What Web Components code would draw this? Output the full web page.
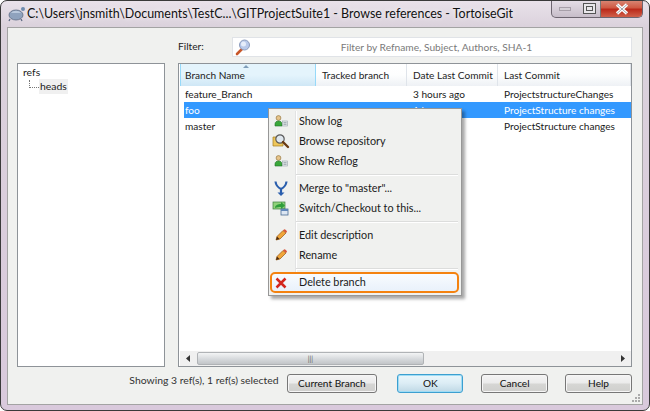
<!DOCTYPE html>
<html><head><meta charset="utf-8"><title>Browse references</title>
<style>
html,body{margin:0;padding:0;background:#fff}
body{font:11px Lato,"Open Sans",sans-serif;color:#1a1a1a;width:650px;height:411px;overflow:hidden}
</style></head><body>
<tg-window>
  <tg-titlebar slot="title">C:\Users\jnsmith\Documents\TestC...\GITProjectSuite1 - Browse references - TortoiseGit</tg-titlebar>
  <tg-filter></tg-filter>
  <tg-panes></tg-panes>
  <tg-footer></tg-footer>
  <tg-menu slot="overlay">
    <tg-item icon="log">Show log</tg-item>
    <tg-item icon="browse">Browse repository</tg-item>
    <tg-item icon="log">Show Reflog</tg-item>
    <tg-sep></tg-sep>
    <tg-item icon="merge">Merge to "master"...</tg-item>
    <tg-item icon="switch">Switch/Checkout to this...</tg-item>
    <tg-sep></tg-sep>
    <tg-item icon="pencil">Edit description</tg-item>
    <tg-item icon="pencil">Rename</tg-item>
    <tg-sep></tg-sep>
    <tg-item icon="delete" hot>Delete branch</tg-item>
  </tg-menu>
</tg-window>
<script>
const ICONS={
log:`<svg width="16" height="16" viewBox="0 0 16 16"><circle cx="5.500" cy="5" r="2.400" fill="#e6c48a" stroke="#8a6a30" stroke-width=".6"/><path d="M2 13v-2C2 9 3.500 8 5.500 8S9 9 9 11v2z" fill="#3aa83a" stroke="#1f6f2a" stroke-width=".6"/><rect x="9.500" y="8" width="5" height="5" fill="#e4e8ea" stroke="#9aa5ac" stroke-width=".6"/><path d="M10.500 9.700h3M10.500 11.300h3" stroke="#7c8a92" stroke-width=".7"/></svg>`,
browse:`<svg width="18" height="18" viewBox="0 0 18 18"><path d="M1 5h5l1 1h4v8H1z" fill="#eec65a" stroke="#a57d20" stroke-width=".7"/><circle cx="8" cy="7" r="4.200" fill="#dfe7ee" stroke="#5a5a5a" stroke-width="1.200"/><path d="M11 10l5 5" stroke="#6b3b14" stroke-width="2.400" stroke-linecap="round"/></svg>`,
merge:`<svg width="16" height="18" viewBox="0 0 16 18"><path d="M2.500 2.500C3 7 5 8.500 8 10c3-1.500 5-3 5.500-7.500M8 10v5" fill="none" stroke="#2a5fae" stroke-width="2.200"/><path d="M4.500 13.500L8 17l3.500-3.500z" fill="#2a5fae"/></svg>`,
switch:`<svg width="18" height="16" viewBox="0 0 18 16"><rect x="1" y="2" width="12" height="7" fill="#8fd27a" stroke="#3c7f40" stroke-width=".7"/><path d="M3 8c0-3 3-4 6-4V2l4 3.500L9 9V7C7 7 5 7 3 8z" fill="#2f9e3a"/><rect x="9" y="9" width="7" height="6" fill="#dce6f2" stroke="#4a6b94" stroke-width=".8"/><rect x="9" y="9" width="7" height="2" fill="#5f86b8"/></svg>`,
pencil:`<svg width="14" height="14" viewBox="0 0 14 14"><path d="M2 12l1-3.500 6-6L12 5l-6 6z" fill="#f0a63a" stroke="#9a5a14" stroke-width=".7"/><path d="M9 2.500l3 2.500 1-1.200c0-1-1.500-2.500-2.800-2.500z" fill="#d9583c"/><path d="M2 12l1-3.500L5.500 11z" fill="#4a2a10"/></svg>`,
delete:`<svg width="12" height="12" viewBox="0 0 12 12"><path d="M1.500 1.500l9 9M10.500 1.500l-9 9" stroke="#d3261e" stroke-width="2.500"/></svg>`
};
function def(name,css,html){
  customElements.define(name,class extends HTMLElement{
    constructor(){super();const s=this.attachShadow({mode:"open"});s.innerHTML=`<style>${css}</style>${html}`;}
  });
}
def("tg-window",`
:host{display:block;position:relative;width:650px;height:411px;box-sizing:border-box;border:1px solid #3a3a3a;border-radius:7px;
 background:linear-gradient(#e9e2ea,#dbd2dc 25px,#d9c9dc);padding:0 6px 6px 6px;overflow:hidden;}
.client{box-sizing:border-box;height:378px;border:1px solid #a3a3a3;background:#f0f1ef;padding:9px 10px 0 9px;display:flex;flex-direction:column;}
`,`<slot name="title"></slot><div class="client"><slot></slot></div><slot name="overlay"></slot>`);
def("tg-titlebar",`
:host{display:flex;height:26px;box-sizing:border-box;padding-bottom:2px;align-items:center;font-size:12.450px;color:#111;white-space:nowrap;position:relative;text-shadow:0 0 5px #fff}
svg.logo{margin:0;flex:none}
.ctl{position:absolute;right:0;top:-1px;height:18px;width:92px;display:flex;box-sizing:border-box;border:1px solid #6d6570;border-top:0;border-radius:0 0 5px 5px;overflow:hidden;background:linear-gradient(#e6dfe8,#c7bdc9)}
.ctl div{display:flex;align-items:center;justify-content:center;box-sizing:border-box}
.min{width:26px}.max{width:23px;border-right:1px solid #777}.close{flex:1;background:linear-gradient(#d98a78 0,#cf5a44 45%,#bb2a1a 55%,#d0604a)}
`,`<svg class="logo" width="20" height="18" viewBox="0 0 20 18"><ellipse cx="9" cy="11" rx="7" ry="5" fill="#8fa2bd" stroke="#5c6a82" stroke-width=".8"/><path d="M4 9c2-3 8-3 10 0" fill="#b9c8dc"/><circle cx="16" cy="5" r="2" fill="#6d8bae"/><path d="M3 15l-1 2M14 15l1 2" stroke="#5c6a82" stroke-width="1.300"/></svg><slot></slot>
<div class="ctl"><div class="min"><svg width="12" height="6"><rect x=".5" y="1.500" width="11" height="3" fill="#d5d0d7" stroke="#a79fa9"/></svg></div>
<div class="max"><svg width="13" height="11"><rect x=".5" y=".5" width="12" height="10" fill="#e8e6ea" stroke="#555"/><rect x="3.500" y="3.500" width="6" height="4" fill="none" stroke="#555"/></svg></div>
<div class="close"><svg width="16" height="12" viewBox="0 0 16 12"><path d="M3 1.500l10 9M13 1.500l-10 9" stroke="#fff" stroke-width="3.200"/><path d="M3 1.500l10 9M13 1.500l-10 9" stroke="#3d4a56" stroke-width=".5"/></svg></div></div>`);
def("tg-filter",`
:host{display:flex;height:20px;flex:none;align-items:center;padding-left:161px}
label{width:54px;font-size:10.200px;color:#222;margin-top:-3px}
.box{width:401px;height:20px;box-sizing:border-box;border:1px solid #e0e3e7;background:#fff;display:flex;align-items:center;padding-left:1px;color:#7a7a7a;font-size:10.200px;}
span{flex:1;text-align:center;padding-right:10px;padding-bottom:1px;white-space:nowrap}
`,`<label>Filter:</label><div class="box"><svg width="18" height="18" viewBox="0 0 18 18"><path d="M3 16l5-5" stroke="#c8572a" stroke-width="2.600" stroke-linecap="round"/><circle cx="10.500" cy="7" r="5" fill="#b9c9ea" stroke="#8c9cbc"/><circle cx="9.500" cy="6" r="2.500" fill="#e6edfa"/></svg><span>Filter by Refname, Subject, Authors, SHA-1</span></div>`);
def("tg-panes",`
:host{display:flex;gap:13px;height:304px;margin-top:6px;flex:none}
.tree{width:148px;box-sizing:border-box;border:1px solid #8e9398;background:#fff;padding:1px 0 0 5px;line-height:14px;font-size:10.400px}
.kid{display:flex;align-items:center;margin-left:6px}
.dots{width:10px;height:8px;margin-top:-5px;border-left:1px dotted #777;border-bottom:1px dotted #777;box-sizing:border-box}
.sel{background:#f0f0f0;padding:0 1px;height:15px;line-height:15px}
.list{flex:1;box-sizing:border-box;border:1px solid #8e9398;background:#fff;padding:0 0 0 1px;display:flex;flex-direction:column;font-size:10.100px}
.head{display:grid;grid-template-columns:136px 91px 91px 1fr;height:22px;background:linear-gradient(#fff,#fdfefe 50%,#eef1f5);}
.head div{display:flex;align-items:center;padding-left:6px;border-right:1px solid #dfe4ea;position:relative;color:#222;white-space:nowrap;min-width:0;padding-bottom:1px;box-sizing:border-box}
.head .on{background:linear-gradient(#e4f4fc,#e4f4fc 50%,#cfe7f6);border:1px solid #96d9f9;border-top:0;border-bottom:0;padding-left:4px}
.head .on::before{content:"";position:absolute;left:62px;top:1px;border:3px solid transparent;border-top:0;border-bottom:3px solid #7f9db9}
.rows{flex:1;padding-left:4px}
.row{display:grid;grid-template-columns:132px 91px 91px 1fr;height:16px;line-height:16px;color:#1a1a1a}
.row span{padding-left:1px;white-space:nowrap}
.row span:nth-child(3),.row span:nth-child(4){padding-left:6px}
.row.s{background:#3399ff;color:#fff}
.bar{height:15px;flex:none;background:#f0f0f0;display:flex;align-items:center;position:relative}
.arr{width:17px;display:flex;justify-content:center;flex:none}
.thumb{width:227px;height:13px;box-sizing:border-box;border:1px solid #b0b3b6;border-radius:2px;background:linear-gradient(#f3f4f5,#d6d9dc 55%,#c2c5c8);display:flex;align-items:center;justify-content:center;font-size:7px;color:#555}
.fill{flex:1}
`,`<div class="tree">refs<div class="kid"><div class="dots"></div><div class="sel">heads</div></div></div>
<div class="list"><div class="head"><div class="on">Branch Name</div><div>Tracked branch</div><div>Date Last Commit</div><div>Last Commit</div></div>
<div class="rows">
<div class="row"><span>feature_Branch</span><span></span><span>3 hours ago</span><span>ProjectstructureChanges</span></div>
<div class="row s"><span>foo</span><span></span><span>1 hour ago</span><span>ProjectStructure changes</span></div>
<div class="row"><span>master</span><span></span><span>1 hour ago</span><span>ProjectStructure changes</span></div>
</div>
<div class="bar"><div class="arr"><svg width="5" height="7"><path d="M4 0v7L0 3.500z" fill="#333"/></svg></div><div class="thumb">|||</div><div class="fill"></div><div class="arr"><svg width="5" height="7"><path d="M1 0v7l4-3.500z" fill="#333"/></svg></div></div></div>`);
def("tg-footer",`
:host{display:flex;height:18px;margin-top:7px;flex:none;align-items:center;font-size:10.400px;color:#333;position:relative}
.st{width:270px;text-align:right;padding-right:8px;box-sizing:border-box;margin-top:-6px;white-space:nowrap}
.grip{position:absolute;right:-9px;bottom:-11px}
`,`<div class="st">Showing 3 ref(s), 1 ref(s) selected</div>
<tg-btn w="91">Current Branch</tg-btn><tg-btn w="66" m="20" def>OK</tg-btn><tg-btn w="67" m="18">Cancel</tg-btn><tg-btn w="67" m="17">Help</tg-btn>
<svg class="grip" width="9" height="9"><g fill="#aaa"><rect x="6" y="0" width="2" height="2"/><rect x="3" y="3" width="2" height="2"/><rect x="6" y="3" width="2" height="2"/><rect x="0" y="6" width="2" height="2"/><rect x="3" y="6" width="2" height="2"/><rect x="6" y="6" width="2" height="2"/></g></svg>`);
customElements.define("tg-btn",class extends HTMLElement{
  constructor(){super();const s=this.attachShadow({mode:"open"});
   const d=this.hasAttribute("def");
   s.innerHTML=`<style>:host{display:flex;box-sizing:border-box;height:19px;width:${this.getAttribute("w")}px;margin-left:${this.getAttribute("m")||0}px;align-items:center;justify-content:center;font-size:10.100px;color:#111;border:1px solid ${d?"#3c9fd0":"#777"};border-radius:3px;background:${d?"linear-gradient(#eaf6fb,#dcedf5 48%,#bfd8e5)":"linear-gradient(#f4f4f4,#ebebeb 48%,#d6d6d4 52%,#cfcfcd)"};box-shadow:inset 0 0 0 1px ${d?"#9fdcf5":"#f6f6f6"}}</style><slot></slot>`;}
});
def("tg-menu",`
:host{position:absolute;left:267px;top:107px;width:194px;box-sizing:border-box;border:1px solid #979797;background:#f0f1ef;padding:2px 2px 2px;display:flex;flex-direction:column;box-shadow:3px 3px 3px rgba(0,0,0,.35);font-size:10.800px;color:#1a1a1a}
:host::before{content:"";position:absolute;left:26px;top:2px;bottom:2px;border-left:1px solid #e2e3e3;border-right:1px solid #fff;}
`,`<slot></slot>`);
customElements.define("tg-item",class extends HTMLElement{
  constructor(){super();const s=this.attachShadow({mode:"open"});
  const hot=this.hasAttribute("hot");
  s.innerHTML=`<style>:host{display:flex;height:${hot?21:20}px;align-items:center;position:relative;box-sizing:border-box;${hot?"margin-left:-1px;border:2px solid #f4820f;border-radius:5px;background:linear-gradient(#f8fbfe,#e9f1fb);":""}}
  .ic{width:${hot?17:20}px;display:flex;justify-content:center;align-items:center;flex:none;margin-right:${hot?10:8}px}
  .t{white-space:nowrap;margin-top:-2px}</style><div class="ic">${ICONS[this.getAttribute("icon")]}</div><div class="t"><slot></slot></div>`;}
});
def("tg-sep",`:host{display:block;height:1px;background:#dcdddc;border-bottom:1px solid #fff;margin:3px 1px 2px 25px;position:relative}`,``);
</script>
</body></html>
